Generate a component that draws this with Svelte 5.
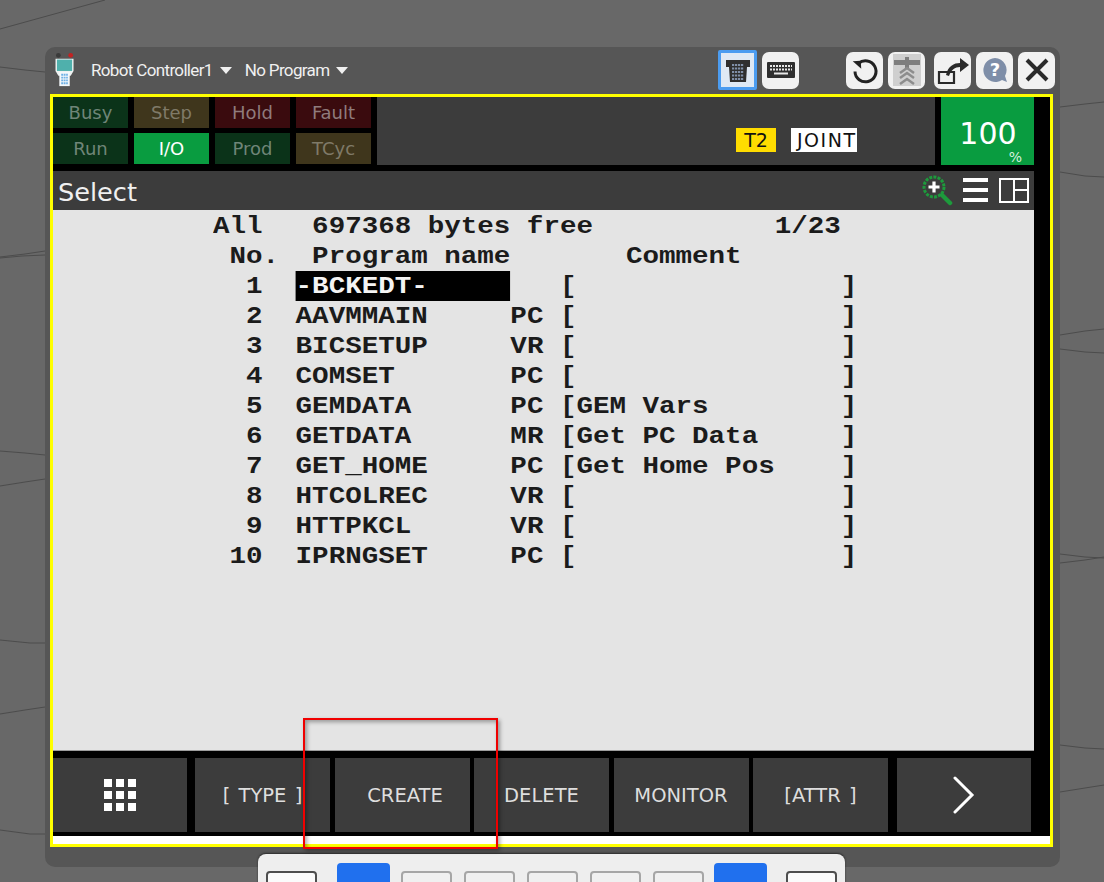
<script>
  const status = [
    { label: "Busy", tone: "green" },
    { label: "Step", tone: "amber" },
    { label: "Hold", tone: "red" },
    { label: "Fault", tone: "red" },
    { label: "Run", tone: "green" },
    { label: "I/O", tone: "on" },
    { label: "Prod", tone: "green" },
    { label: "TCyc", tone: "amber" }
  ];

  const programs = [
    { no: " 1", name: "-BCKEDT-", kind: "  ", comment: "" },
    { no: " 2", name: "AAVMMAIN", kind: "PC", comment: "" },
    { no: " 3", name: "BICSETUP", kind: "VR", comment: "" },
    { no: " 4", name: "COMSET", kind: "PC", comment: "" },
    { no: " 5", name: "GEMDATA", kind: "PC", comment: "GEM Vars" },
    { no: " 6", name: "GETDATA", kind: "MR", comment: "Get PC Data" },
    { no: " 7", name: "GET_HOME", kind: "PC", comment: "Get Home Pos" },
    { no: " 8", name: "HTCOLREC", kind: "VR", comment: "" },
    { no: " 9", name: "HTTPKCL", kind: "VR", comment: "" },
    { no: "10", name: "IPRNGSET", kind: "PC", comment: "" }
  ];

  const softkeys = ["[ TYPE ]", "CREATE", "DELETE", "MONITOR", "[ATTR ]"];

  const lines = [
    "M0 67L25 70L45 72", "M0 257L25 254L45 251", "M0 258L22 256L45 255",
    "M0 451L25 453L45 455", "M0 486L25 482L45 479", "M0 640L30 643L45 643",
    "M0 714L25 710L45 707", "M0 830L30 834L45 834",
    "M1060 107L1085 104L1104 102", "M1060 172L1085 176L1104 177",
    "M1060 335L1085 331L1104 329", "M1060 349L1085 352L1104 353",
    "M1060 554L1085 557L1104 558", "M1060 563L1085 560L1104 557",
    "M1060 745L1085 748L1104 749", "M1060 792L1085 788L1104 785"
  ];

  const pad = (s, n) => s.padEnd(n, " ");
</script>

<div class="stage">
  <svg class="backdrop" width="1104" height="882" viewBox="0 0 1104 882" fill="none">
    <path d="M0 29L105 0" stroke="#4c4c4c" />
    {#each lines as d}
      <path {d} stroke="#4c4c4c" />
    {/each}
  </svg>

  <div class="panel">
    <header class="topbar">
      <svg class="pendant" width="26" height="36" viewBox="0 0 26 38">
        <circle cx="6" cy="3.5" r="2.5" fill="#3a3a3a" />
        <circle cx="19" cy="3.5" r="2.5" fill="#c22222" />
        <path d="M3 7H22V20L19 25H6L3 20Z" fill="#eef2f2" />
        <rect x="4.5" y="8" width="16" height="12" fill="#4fb0ac" />
        <rect x="7" y="21" width="11" height="15" fill="#f4f8fb" />
        <path d="M9 24h7M9 27h7M9 30h7M9 33h7" stroke="#6fb1e6" stroke-width="2" stroke-dasharray="2 .6" />
      </svg>
      <span class="menu">Robot Controller1<i class="caret"></i></span>
      <span class="menu second">No Program<i class="caret"></i></span>

      <div class="tools">
        <button class="tool selected" aria-label="Teach pendant">
          <svg width="28" height="28" viewBox="0 0 28 28">
            <path d="M2 4H26V11H23L22 26H6L5 11H2Z" fill="#2f2f2f" />
            <path d="M8 9h12M8 12.500h12M8 16h12M8 19.500h12M8 23h12" stroke="#7f8fa8" stroke-width="2" stroke-dasharray="2.200 .8" />
          </svg>
        </button>
        <button class="tool" aria-label="Keyboard">
          <svg width="28" height="20" viewBox="0 0 28 20">
            <rect x="0" y="2" width="28" height="16" rx="1" fill="#2f2f2f" />
            <path d="M3 6h22M3 9.500h22" stroke="#e8e8e8" stroke-width="2" stroke-dasharray="2 1" />
            <path d="M7 13.500h14" stroke="#e8e8e8" stroke-width="2" />
          </svg>
        </button>
        <button class="tool gap-a" aria-label="Refresh">
          <svg width="30" height="30" viewBox="0 0 30 30" fill="none">
            <path d="M8.500 8.500A10.500 10.500 0 1 1 5 16.500" stroke="#222" stroke-width="3" />
            <path d="M3 6H11V14Z" fill="#222" transform="rotate(-4 7 10)" />
          </svg>
        </button>
        <button class="tool dim" aria-label="Step">
          <svg width="30" height="32" viewBox="0 0 30 32">
            <rect x="1" y="0" width="28" height="32" fill="#cfcfcf" />
            <rect x="2" y="6" width="26" height="5" fill="#7e7e7e" />
            <rect x="13" y="3" width="4" height="12" fill="#7e7e7e" />
            <path d="M8 19L15 14L22 19M8 24L15 19L22 24M8 30L15 25L22 30" fill="none" stroke="#8d8d8d" stroke-width="2.500" />
          </svg>
        </button>
        <button class="tool gap-b" aria-label="Export">
          <svg width="34" height="30" viewBox="0 0 34 30" fill="none">
            <path d="M3 17H18V28H3Z" stroke="#2a2a2a" stroke-width="2.200" />
            <path d="M10 20C12 11 18 8 24 8V3L33 10L24 17V12C19 12 15 15 13 21Z" fill="#2a2a2a" />
          </svg>
        </button>
        <button class="tool" aria-label="Help">
          <svg width="28" height="28" viewBox="0 0 28 28">
            <path d="M14 2A12 12 0 1 0 21 24L26 26L24 20A12 12 0 0 0 14 2Z" fill="#7e8ea8" />
            <text x="14" y="20" class="help">?</text>
          </svg>
        </button>
        <button class="tool" aria-label="Close">
          <svg width="26" height="26" viewBox="0 0 26 26">
            <path d="M3 3L23 23M23 3L3 23" stroke="#2a2a2a" stroke-width="4" />
          </svg>
        </button>
      </div>
    </header>

    <div class="frame">
      <section class="status">
        <div class="cells">
          {#each status as cell}
            <span class="cell {cell.tone}">{cell.label}</span>
          {/each}
        </div>
        <div class="info">
          <span class="tag mode">T2</span>
          <span class="tag joint"><span>JOINT</span></span>
        </div>
        <div class="speed">100<small>%</small></div>
      </section>

      <section class="title">
        <span>Select</span>
        <svg class="zoom" width="32" height="32" viewBox="0 0 32 32" fill="none">
          <circle cx="13" cy="13" r="10" stroke="#1d9a3c" stroke-width="3" stroke-dasharray="3 1.200" />
          <path d="M21 21L29 29" stroke="#1d9a3c" stroke-width="4.500" stroke-linecap="round" />
          <path d="M13 7.500V18.500M7.500 13H18.500" stroke="#fff" stroke-width="3.200" />
        </svg>
        <svg class="burger" width="25" height="24" viewBox="0 0 25 24">
          <path d="M0 2h25M0 12h25M0 22h25" stroke="#fff" stroke-width="4" />
        </svg>
        <svg class="layout" width="30" height="25" viewBox="0 0 30 25" fill="none">
          <path d="M1 1H29V24H1ZM15 1V24M15 12H29" stroke="#fff" stroke-width="2" />
        </svg>
      </section>

      <main class="listing">
        <pre>{"All   697368 bytes free           1/23"}</pre>
        <pre>{" No.  Program name       Comment"}</pre>
        {#each programs as p, i}
          <pre>{" " + p.no + "  "}<span class:cursor={i === 0}>{pad(p.name, 13)}</span>{p.kind + " [" + pad(p.comment, 16) + "]"}</pre>
        {/each}
      </main>

      <nav class="softkeys">
        <button class="key menu-key" aria-label="Menu">
          <svg width="32" height="32" viewBox="0 0 32 32" fill="#fff">
            {#each [0, 1, 2] as r}
              {#each [0, 1, 2] as c}
                <rect x={c * 12} y={r * 12} width="8" height="8" />
              {/each}
            {/each}
          </svg>
        </button>
        {#each softkeys as label}
          <button class="key">{label}</button>
        {/each}
        <button class="key next" aria-label="Next">
          <svg width="24" height="38" viewBox="0 0 24 38" fill="none">
            <path d="M3 2L20 19L3 36" stroke="#fff" stroke-width="3" stroke-linecap="round" />
          </svg>
        </button>
      </nav>
      <div class="strip"></div>
    </div>

    <div class="keypad">
      <span class="pad dark"></span>
      <span class="pad blue"></span>
      <span class="pad"></span>
      <span class="pad"></span>
      <span class="pad"></span>
      <span class="pad"></span>
      <span class="pad"></span>
      <span class="pad blue"></span>
      <span class="pad dark"></span>
    </div>
  </div>

  <div class="callout"></div>
</div>

<style>
  :global(body) {
    background: #686868;
  }
  .stage {
    position: relative;
    height: 882px;
    overflow: hidden;
    padding: 47px 44px 0 45px;
    box-sizing: border-box;
    font-family: "DejaVu Sans", sans-serif;
  }
  .backdrop {
    position: absolute;
    left: 0;
    top: 0;
  }
  .panel {
    position: relative;
    height: 820px;
    background: #565656;
    border-radius: 10px;
  }
  .topbar {
    display: flex;
    align-items: center;
    height: 46.500px;
    padding-left: 7px;
    color: #f0f0f0;
    font-family: Roboto, sans-serif;
    font-size: 17px;
    letter-spacing: -0.65px;
  }
  .pendant {
    margin-right: 13px;
  }
  .menu {
    display: flex;
    align-items: center;
    white-space: nowrap;
  }
  .second {
    margin-left: 13px;
  }
  .caret {
    margin-left: 7px;
    border: 6px solid transparent;
    border-top: 7px solid #f0f0f0;
    border-bottom: 0;
  }
  .tools {
    display: flex;
    align-items: center;
    gap: 5px;
    margin-left: auto;
    margin-right: 5px;
  }
  .tool {
    display: flex;
    align-items: center;
    justify-content: center;
    width: 37px;
    height: 37px;
    padding: 0;
    background: #f1f1f1;
    border: 0;
    border-radius: 7px;
    box-sizing: border-box;
  }
  .tool.selected {
    width: 39px;
    height: 40px;
    background: #dfe9f4;
    border: 3px solid #4b9cf0;
    border-radius: 2px;
  }
  .tool.gap-a {
    margin-left: 42px;
  }
  .tool.gap-b {
    margin-left: 4px;
  }
  .help {
    fill: #fff;
    font-family: "DejaVu Sans", sans-serif;
    font-size: 18px;
    font-weight: 700;
    text-anchor: middle;
  }

  .frame {
    display: flex;
    flex-direction: column;
    width: 1003px;
    height: 753px;
    margin-left: 5px;
    background: #000;
    border: 3px solid #ffff00;
    box-sizing: border-box;
  }
  .status {
    display: flex;
    height: 68px;
  }
  .cells {
    display: grid;
    grid-template-columns: repeat(4, 75px);
    grid-auto-rows: 31px;
    gap: 5px 6px;
    margin-right: 6px;
  }
  .cell {
    display: flex;
    align-items: center;
    justify-content: center;
    font-size: 18px;
  }
  .green {
    background: #0b3319;
    color: #6f8578;
  }
  .amber {
    background: #3f361c;
    color: #7f7a68;
  }
  .red {
    background: #3a0b0e;
    color: #8f7b7c;
  }
  .on {
    background: #099c40;
    color: #fff;
  }
  .info {
    display: flex;
    align-items: flex-end;
    justify-content: flex-end;
    gap: 15px;
    width: 558px;
    padding: 0 78px 13px 0;
    box-sizing: border-box;
    background: #3c3c3c;
  }
  .tag {
    height: 24px;
    line-height: 25px;
    font-size: 19px;
    text-align: center;
    color: #111;
  }
  .mode {
    width: 40px;
    background: #ffdc00;
  }
  .joint {
    display: block;
    width: 66px;
    overflow: hidden;
    background: #fff;
    white-space: nowrap;
    text-align: left;
    letter-spacing: 1.500px;
  }
  .joint span {
    margin-left: 6px;
  }
  .speed {
    position: relative;
    width: 93px;
    margin-left: 6px;
    padding: 17px 0 0 1px;
    box-sizing: border-box;
    background: #099c40;
    color: #fff;
    font-size: 30px;
    line-height: 40px;
    text-align: center;
  }
  .speed small {
    position: absolute;
    right: 12px;
    bottom: -1px;
    font-size: 14px;
    line-height: 18px;
    color: #d6f0de;
  }
  .title {
    display: flex;
    align-items: center;
    width: 981px;
    height: 39px;
    margin-top: 6px;
    padding: 0 5px;
    box-sizing: border-box;
    background: #3c3c3c;
    color: #f0f0f0;
    font-size: 25.600px;
  }
  .title > span {
    margin-top: 4px;
  }
  .zoom {
    margin-left: auto;
  }
  .burger {
    margin-left: 10px;
  }
  .layout {
    margin-left: 11px;
  }
  .listing {
    width: 981px;
    height: 541px;
    padding: 1px 0 0 160px;
    box-sizing: border-box;
    background: #e4e4e4;
    border-bottom: 1px solid #9c9c9c;
    color: #1b1b1b;
  }
  /* the controller font is wider than any mono we have, so stretch it */
  pre {
    height: 30px;
    margin: 0;
    font-family: "Liberation Mono", monospace;
    font-size: 24px;
    font-weight: 700;
    line-height: 32px;
    transform: scaleX(1.147);
    transform-origin: left;
  }
  .cursor {
    display: inline-block;
    height: 30px;
    background: #000;
    color: #f4f4f4;
    vertical-align: top;
  }
  .softkeys {
    display: flex;
    width: 981px;
    height: 74px;
    margin-top: 7px;
    gap: 4.500px;
  }
  .key {
    display: flex;
    align-items: center;
    justify-content: center;
    flex: 0 0 135px;
    padding: 1px 0 0;
    border: 0;
    background: #3c3c3c;
    color: #dedede;
    font-family: "DejaVu Sans", sans-serif;
    font-size: 19.500px;
    word-spacing: 2px;
    white-space: nowrap;
  }
  .key:nth-child(3) {
    padding-left: 6px;
  }
  .menu-key {
    flex-basis: 134px;
    margin-right: 3.500px;
  }
  .next {
    flex-basis: 134px;
    margin-left: 4px;
  }
  .strip {
    height: 8px;
    margin-top: 4px;
    background: #fff;
  }

  .keypad {
    display: flex;
    align-items: flex-start;
    width: 587px;
    height: 60px;
    margin: 7px 0 0 213px;
    padding: 9px 6px 0 8px;
    box-sizing: border-box;
    gap: 12px;
    background: #eeeeee;
    border-radius: 8px 8px 0 0;
    box-shadow: 0 -1px 2px #2a2a2a;
  }
  .pad {
    flex: 0 0 51px;
    height: 40px;
    margin-top: 8px;
    box-sizing: border-box;
    background: #f0f0f0;
    border: 2px solid #a6a6a6;
    border-radius: 4px;
  }
  .pad.dark {
    background: #fbfbfb;
    border-color: #4e4e4e;
  }
  .pad.dark:first-child {
    margin-right: 8px;
  }
  .pad.blue {
    flex-basis: 53px;
    height: 48px;
    margin-top: 0;
    background: #2070ee;
    border: 0;
  }
  .pad.blue:nth-child(2) {
    margin-right: -1px;
  }
  .pad.blue:nth-child(8) {
    margin-left: -2px;
    margin-right: 7px;
  }
  .callout {
    position: absolute;
    left: 303px;
    top: 718px;
    width: 195px;
    height: 131px;
    box-sizing: border-box;
    border: 2px solid #f00000;
    box-shadow: 2px 2px 4px rgba(0, 0, 0, 0.35), inset 2px 2px 4px rgba(0, 0, 0, 0.35);
  }
</style>
